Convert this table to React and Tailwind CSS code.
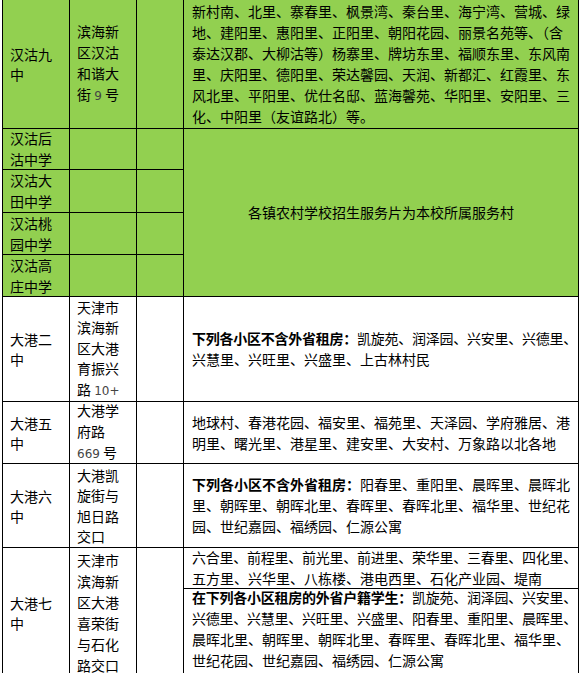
import React from 'react'

const font = { fontFamily: '"Noto Sans CJK SC", "Noto Sans", sans-serif' }

const green = 'bg-[#92d050]'

const Num = ({ children }) => (
    <span className="text-[12px] text-[#444]" style={{ fontFamily: '"DejaVu Sans", sans-serif' }}>{children}</span>
)

// one cell of the grid; the black grid gap draws the lines
const Cell = ({ className = '', children }) => (
    <div className={`flex flex-col justify-center overflow-visible whitespace-nowrap ${className}`}>
        {children}
    </div>
)

const Lines = ({ lines, className = '' }) => (
    <div className={className}>
        {lines.map((l, i) => (
            <div key={i}>{l}</div>
        ))}
    </div>
)

// 28-char lines need a hair less spacing to fit the cell
const Tight = ({ children }) => <span className="tracking-[-0.25px]">{children}</span>

const greenRows = [
    ['汉沽后', '沽中学'],
    ['汉沽大', '田中学'],
    ['汉沽桃', '园中学'],
    ['汉沽高', '庄中学'],
]

export default function App() {
    return (
        <div className="w-[581px] h-[673px] overflow-hidden bg-white text-[14px] text-black" style={font}>
            <div className="ml-[2px] w-[577px] grid grid-cols-[66px_66px_46px_394px] grid-rows-[128px_40px_42px_41px_41px_104px_61px_83px_40px_88px] gap-px px-px pb-px bg-black">
                {/* 汉沽九中 */}
                <Cell className={`${green} col-start-1 row-start-1 pl-[7px] leading-[20px]`}>
                    <Lines lines={['汉沽九', '中']} />
                </Cell>
                <Cell className={`${green} col-start-2 row-start-1 pl-[7px] leading-[21px]`}>
                    <Lines lines={['滨海新', '区汉沽', '和谐大', <>街 <Num>9</Num> 号</>]} />
                </Cell>
                <Cell className={`${green} col-start-3 row-start-1`} />
                <Cell className={`${green} col-start-4 row-start-1 pl-[8px] leading-[21px]`}>
                    <Lines
                        lines={[
                            '新村南、北里、寨春里、枫景湾、秦台里、海宁湾、营城、绿',
                            '地、建阳里、惠阳里、正阳里、朝阳花园、丽景名苑等、（含',
                            '泰达汉郡、大柳沽等）杨寨里、牌坊东里、福顺东里、东风南',
                            '里、庆阳里、德阳里、荣达馨园、天润、新都汇、红霞里、东',
                            '风北里、平阳里、优仕名邸、蓝海馨苑、华阳里、安阳里、三',
                            '化、中阳里（友谊路北）等。',
                        ]}
                    />
                </Cell>

                {/* 汉沽 rural schools */}
                {greenRows.map((n, i) => (
                    <React.Fragment key={i}>
                        <Cell className={`${green} col-start-1 pl-[7px] leading-[21px]`}>
                            <Lines lines={n} />
                        </Cell>
                        <Cell className={`${green} col-start-2`} />
                        <Cell className={`${green} col-start-3`} />
                    </React.Fragment>
                ))}
                <Cell className={`${green} col-start-4 row-start-2 row-span-4 items-center`}>
                    各镇农村学校招生服务片为本校所属服务村
                </Cell>

                {/* 大港二中 */}
                <Cell className="bg-white col-start-1 row-start-6 pl-[7px] leading-[20px]">
                    <Lines lines={['大港二', '中']} />
                </Cell>
                <Cell className="bg-white col-start-2 row-start-6 pl-[7px] leading-[20.5px]">
                    <Lines lines={['天津市', '滨海新', '区大港', '育振兴', <>路 <Num>10+</Num></>]} />
                </Cell>
                <Cell className="bg-white col-start-3 row-start-6" />
                <Cell className="bg-white col-start-4 row-start-6 pl-[8px] leading-[21px]">
                    <Lines
                        lines={[
                            <Tight><b>下列各小区不含外省租房：</b>凯旋苑、润泽园、兴安里、兴德里、</Tight>,
                            '兴慧里、兴旺里、兴盛里、上古林村民',
                        ]}
                    />
                </Cell>

                {/* 大港五中 */}
                <Cell className="bg-white col-start-1 row-start-7 pl-[7px] leading-[20px]">
                    <Lines lines={['大港五', '中']} />
                </Cell>
                <Cell className="bg-white col-start-2 row-start-7 pl-[7px] leading-[21px]">
                    <Lines lines={['大港学', '府路', <><Num>669</Num> 号</>]} />
                </Cell>
                <Cell className="bg-white col-start-3 row-start-7" />
                <Cell className="bg-white col-start-4 row-start-7 pl-[8px] leading-[21px]">
                    <Lines
                        lines={[
                            '地球村、春港花园、福安里、福苑里、天泽园、学府雅居、港',
                            '明里、曙光里、港星里、建安里、大安村、万象路以北各地',
                        ]}
                    />
                </Cell>

                {/* 大港六中 */}
                <Cell className="bg-white col-start-1 row-start-8 pl-[7px] leading-[20px]">
                    <Lines lines={['大港六', '中']} />
                </Cell>
                <Cell className="bg-white col-start-2 row-start-8 pl-[7px] leading-[20.5px]">
                    <Lines lines={['大港凯', '旋街与', '旭日路', '交口']} />
                </Cell>
                <Cell className="bg-white col-start-3 row-start-8" />
                <Cell className="bg-white col-start-4 row-start-8 pl-[8px] leading-[21px]">
                    <Lines
                        lines={[
                            <><b>下列各小区不含外省租房：</b>阳春里、重阳里、晨晖里、晨晖北</>,
                            '里、朝晖里、朝晖北里、春晖里、春晖北里、福华里、世纪花',
                            '园、世纪嘉园、福绣园、仁源公寓',
                        ]}
                    />
                </Cell>

                {/* 大港七中 */}
                <Cell className="bg-white col-start-1 row-start-9 row-span-2 pl-[7px] leading-[20px]">
                    <Lines lines={['大港七', '中']} />
                </Cell>
                <Cell className="bg-white col-start-2 row-start-9 row-span-2 pl-[7px] leading-[21px]">
                    <Lines lines={['天津市', '滨海新', '区大港', '喜荣街', '与石化', '路交口']} />
                </Cell>
                <Cell className="bg-white col-start-3 row-start-9 row-span-2" />
                <Cell className="bg-white col-start-4 row-start-9 pl-[8px] leading-[21px]">
                    <Lines
                        lines={[
                            <Tight>六合里、前程里、前光里、前进里、荣华里、三春里、四化里、</Tight>,
                            '五方里、兴华里、八栋楼、港电西里、石化产业园、堤南',
                        ]}
                    />
                </Cell>
                <Cell className="bg-white col-start-4 row-start-10 justify-start! pl-[8px] leading-[21px]">
                    <Lines
                        className="-mt-[2px]"
                        lines={[
                            <Tight><b>在下列各小区租房的外省户籍学生：</b>凯旋苑、润泽园、兴安里、</Tight>,
                            <Tight>兴德里、兴慧里、兴旺里、兴盛里、阳春里、重阳里、晨晖里、</Tight>,
                            '晨晖北里、朝晖里、朝晖北里、春晖里、春晖北里、福华里、',
                            '世纪花园、世纪嘉园、福绣园、仁源公寓',
                        ]}
                    />
                </Cell>
            </div>
        </div>
    )
}
